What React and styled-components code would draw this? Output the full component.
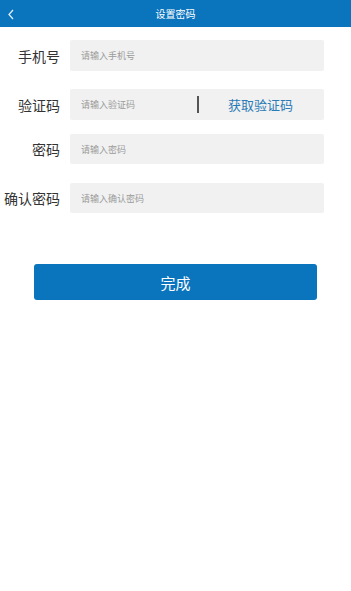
import React from "react";
import styled, { createGlobalStyle } from "styled-components";

const Global = createGlobalStyle`
  html, body { margin: 0; padding: 0; background: #fff; }
  body { font-family: "Noto Sans CJK SC", "Noto Sans", sans-serif; }
  * { box-sizing: border-box; }
`;

const Page = styled.div`
  width: 351px;
  min-height: 591px;
  background: #fff;
  display: flex;
  flex-direction: column;
`;

const Header = styled.div`
  height: 27px;
  background: #0a74bd;
  display: flex;
  align-items: center;
  justify-content: center;
  position: relative;
`;

const Back = styled.svg`
  position: absolute;
  left: 7px;
  top: 9px;
`;

const Title = styled.div`
  color: #fff;
  font-size: 10px;
  line-height: 1;
`;

const Form = styled.div`
  display: flex;
  flex-direction: column;
  padding: 13px 27px 0 0;
`;

const Row = styled.div`
  display: flex;
  align-items: center;
  margin-top: ${(p) => p.$mt}px;
`;

const Label = styled.div`
  width: 60px;
  text-align: right;
  font-size: 14px;
  color: #333;
  line-height: 1;
  flex-shrink: 0;
`;

const Field = styled.div`
  margin-left: 10px;
  flex: 1;
  height: ${(p) => p.$h}px;
  background: #f1f1f1;
  border-radius: 2px;
  display: flex;
  align-items: center;
  padding-left: 11px;
`;

const Placeholder = styled.div`
  flex: 1;
  font-size: 9px;
  color: #9a9a9a;
  line-height: 1;
`;

const Divider = styled.div`
  width: 2px;
  height: 17px;
  background: #555;
  margin-right: 29px;
`;

const CodeBtn = styled.div`
  width: 96px;
  font-size: 13px;
  color: #2b7bb6;
  line-height: 1;
`;

const Submit = styled.div`
  margin: 51px 34px 0 34px;
  height: 36px;
  background: #0a74bd;
  border-radius: 3px;
  display: flex;
  align-items: center;
  justify-content: center;
  color: #fff;
  font-size: 15px;
`;

export default function App() {
  return (
    <Page>
      <Global />
      <Header>
        <Back width="8" height="11" viewBox="0 0 8 11">
          <path d="M6 1 L2 5.5 L6 10" fill="none" stroke="#dfefff" strokeWidth="1.3" />
        </Back>
        <Title>设置密码</Title>
      </Header>
      <Form>
        <Row $mt={0}>
          <Label>手机号</Label>
          <Field $h={31}>
            <Placeholder>请输入手机号</Placeholder>
          </Field>
        </Row>
        <Row $mt={18}>
          <Label>验证码</Label>
          <Field $h={31}>
            <Placeholder>请输入验证码</Placeholder>
            <Divider />
            <CodeBtn>获取验证码</CodeBtn>
          </Field>
        </Row>
        <Row $mt={14}>
          <Label>密码</Label>
          <Field $h={30}>
            <Placeholder>请输入密码</Placeholder>
          </Field>
        </Row>
        <Row $mt={19}>
          <Label>确认密码</Label>
          <Field $h={30}>
            <Placeholder>请输入确认密码</Placeholder>
          </Field>
        </Row>
      </Form>
      <Submit>完成</Submit>
    </Page>
  );
}
